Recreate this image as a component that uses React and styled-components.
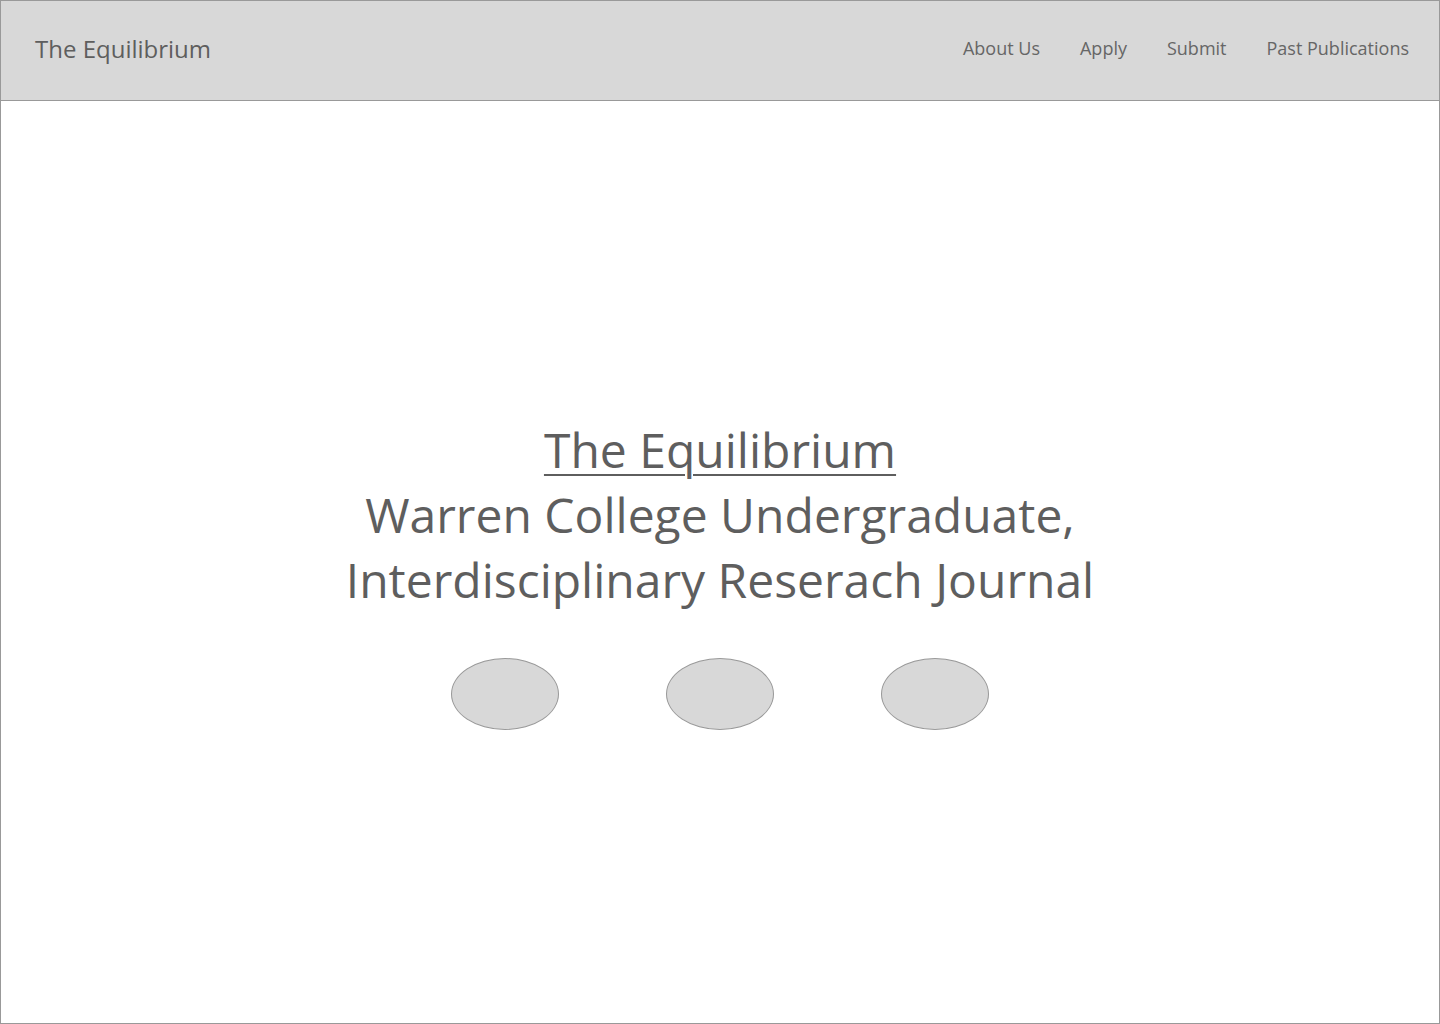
import React from "react";
import styled, { createGlobalStyle } from "styled-components";

const GlobalStyle = createGlobalStyle`
	html, body {
		margin: 0;
		padding: 0;
		background: #ffffff;
	}
	body {
		font-family: "Open Sans", "Liberation Sans", sans-serif;
		color: #5e5e5e;
	}
`;

const links = ["About Us", "Apply", "Submit", "Past Publications"];

const App = () => {
	return (
		<>
			<GlobalStyle />
			<StyledFrame>
				<StyledHeader>
					<StyledBrand>The Equilibrium</StyledBrand>
					<StyledNav>
						{links.map((link) => (
							<StyledNavLink key={link} href="#">
								{link}
							</StyledNavLink>
						))}
					</StyledNav>
				</StyledHeader>
				<StyledHero>
					<StyledTitle>
						<StyledUnderline>The Equilibrium</StyledUnderline>
						<br />
						Warren College Undergraduate,
						<br />
						Interdisciplinary Reserach Journal
					</StyledTitle>
					<StyledDots>
						<StyledDot />
						<StyledDot />
						<StyledDot />
					</StyledDots>
				</StyledHero>
			</StyledFrame>
		</>
	);
};

export default App;

const StyledFrame = styled.div`
	width: 1440px;
	height: 1024px;
	box-sizing: border-box;
	border: 1px solid #999999;
	display: flex;
	flex-direction: column;
`;

const StyledHeader = styled.header`
	height: 100px;
	box-sizing: border-box;
	flex-shrink: 0;
	background: #d8d8d8;
	border-bottom: 1px solid #999999;
	display: flex;
	align-items: center;
	justify-content: space-between;
	padding: 0 30px 5px 34px;
`;

const StyledBrand = styled.div`
	font-size: 24px;
	color: #5e5e5e;
`;

const StyledNav = styled.nav`
	display: flex;
	gap: 40px;
`;

const StyledNavLink = styled.a`
	font-size: 18px;
	color: #666666;
	text-decoration: none;
`;

const StyledHero = styled.main`
	flex: 1;
	display: flex;
	flex-direction: column;
	align-items: center;
	padding-top: 316px;
`;

const StyledTitle = styled.h1`
	margin: 0;
	font-size: 48px;
	font-weight: 400;
	line-height: 65px;
	text-align: center;
	color: #5e5e5e;
`;

const StyledUnderline = styled.span`
	text-decoration: underline;
	text-decoration-thickness: 2px;
	text-underline-offset: 6px;
`;

const StyledDots = styled.div`
	display: flex;
	gap: 107px;
	margin-top: 46px;
`;

const StyledDot = styled.div`
	width: 108px;
	height: 72px;
	box-sizing: border-box;
	border-radius: 50%;
	background: #d8d8d8;
	border: 1px solid #999999;
`;
